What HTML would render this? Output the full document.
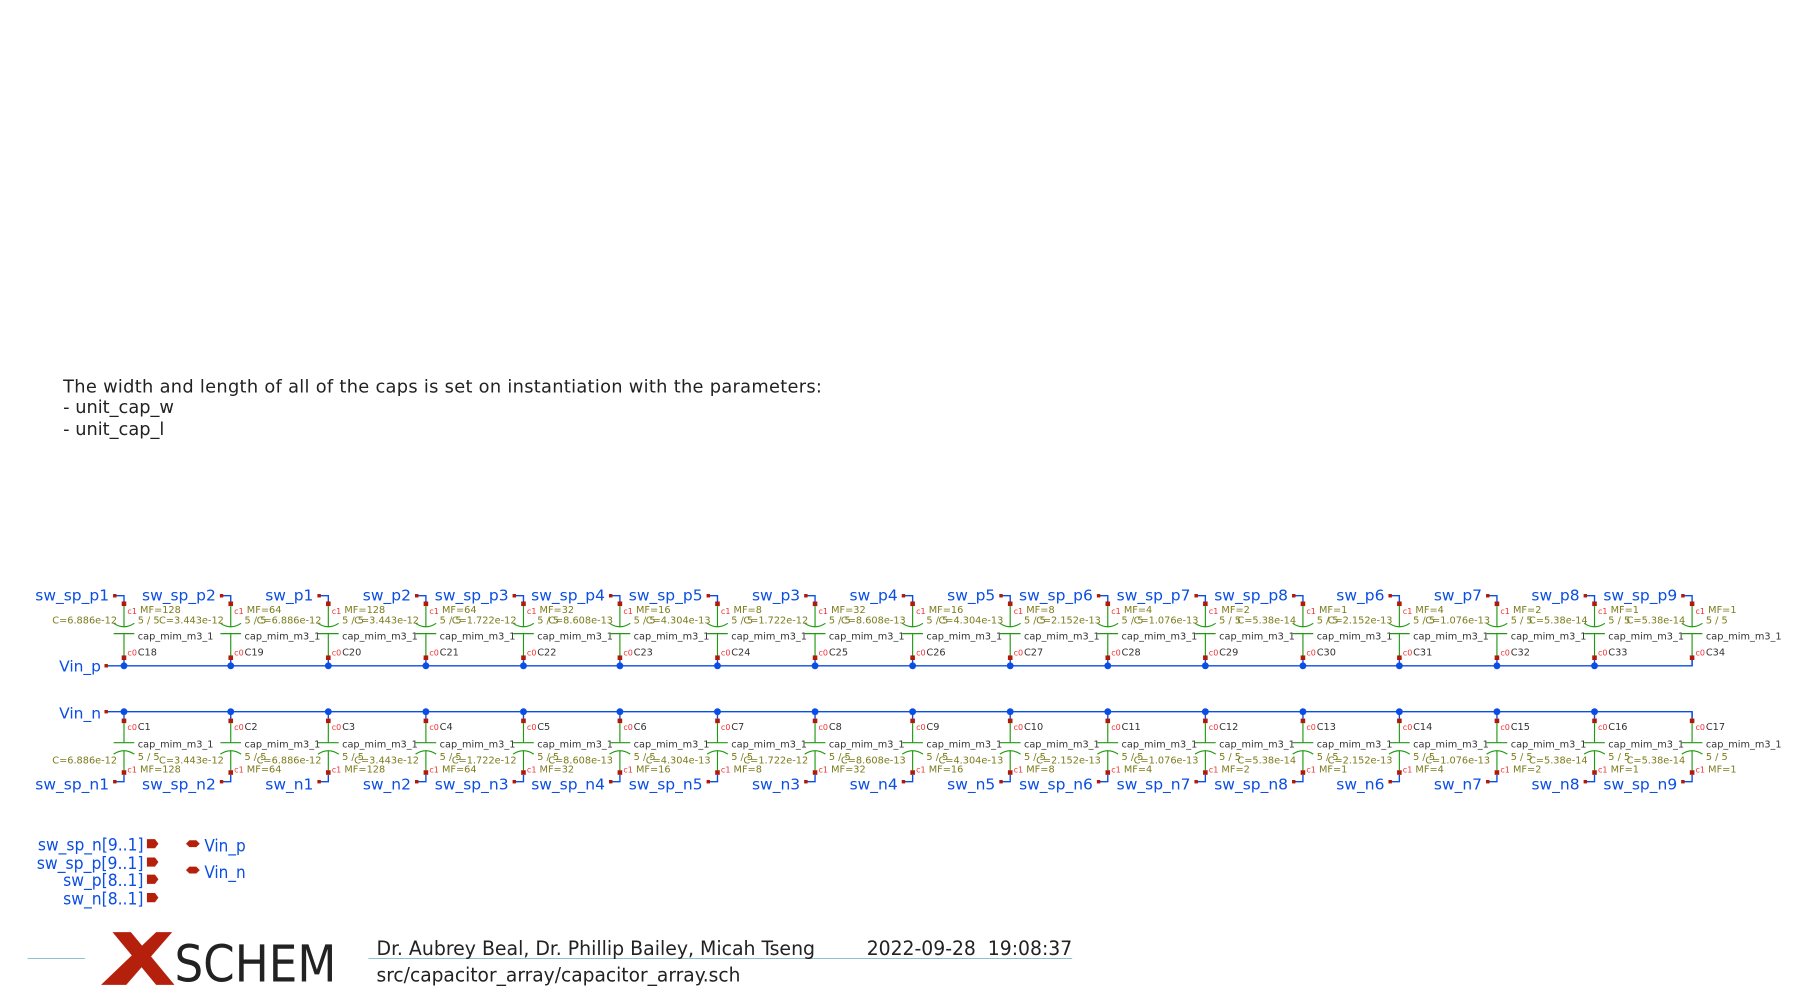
<!DOCTYPE html>
<html><head><meta charset="utf-8"><style>
html,body{margin:0;padding:0;background:#fff;width:1800px;height:1006px;overflow:hidden}
svg{display:block}
.lb{font-family:"DejaVu Sans","Liberation Sans",sans-serif;font-size:13.5px;fill:#0a4ee4}
.s{font-family:"DejaVu Sans","Liberation Sans",sans-serif;font-size:8.5px}
.o{fill:#7b7b1c}.g{fill:#333}.r{fill:#f03030;font-size:7px}
.cd{font-family:"DejaVu Sans Condensed","DejaVu Sans","Liberation Sans",sans-serif}
</style></head><body>
<svg width="1800" height="1006" viewBox="0 0 1568 876.4" preserveAspectRatio="none" xmlns="http://www.w3.org/2000/svg">
<defs>
<g id="ct">
<path d="M-8,519H0V526" fill="none" stroke="#0a4ee4" stroke-width="1.2"/>
<rect x="-9.5" y="517.5" width="3" height="3" fill="#b01a0a"/>
<rect x="-2" y="524" width="4" height="4" fill="#b01a0a"/>
<path d="M0,528V546M-9,543Q0,549 9,543M-9,552H9M0,552V571" fill="none" stroke="#1f9a10" stroke-width="1"/>
<rect x="-2" y="571" width="4" height="4" fill="#b01a0a"/>
<path d="M0,575V580" stroke="#0a4ee4" stroke-width="1.2"/>
</g>
<g id="cb">
<path d="M0,620V626" stroke="#0a4ee4" stroke-width="1.2"/>
<rect x="-2" y="626" width="4" height="4" fill="#b01a0a"/>
<path d="M0,630V647M-9,647H9M-9,657Q0,651 9,657M0,654V671" fill="none" stroke="#1f9a10" stroke-width="1"/>
<rect x="-2" y="671" width="4" height="4" fill="#b01a0a"/>
<path d="M0,675V681H-8" fill="none" stroke="#0a4ee4" stroke-width="1.2"/>
<rect x="-9.5" y="679.5" width="3" height="3" fill="#b01a0a"/>
</g>
</defs>
<text x="55" y="342" font-family="DejaVu Sans,Liberation Sans,sans-serif" font-size="15.5" fill="#222" textLength="661">The width and length of all of the caps is set on instantiation with the parameters:</text>
<text x="55" y="360" font-family="DejaVu Sans,Liberation Sans,sans-serif" font-size="15.5" fill="#222">- unit_cap_w</text>
<text x="55" y="379" font-family="DejaVu Sans,Liberation Sans,sans-serif" font-size="15.5" fill="#222">- unit_cap_l</text>

<path d="M93,580H1474V575M93,620H1474V626" fill="none" stroke="#0a4ee4" stroke-width="1.2"/>
<rect x="91" y="578.5" width="3" height="3" fill="#b01a0a"/><rect x="91" y="618.5" width="3" height="3" fill="#b01a0a"/>
<text class="lb" x="88" y="585" text-anchor="end">Vin_p</text>
<text class="lb" x="88" y="626" text-anchor="end">Vin_n</text>
<g fill="#0a4ee4">
<circle cx="108" cy="580" r="3"/><circle cx="201" cy="580" r="3"/><circle cx="286" cy="580" r="3"/><circle cx="371" cy="580" r="3"/><circle cx="456" cy="580" r="3"/><circle cx="540" cy="580" r="3"/><circle cx="625" cy="580" r="3"/><circle cx="710" cy="580" r="3"/><circle cx="795" cy="580" r="3"/><circle cx="880" cy="580" r="3"/><circle cx="965" cy="580" r="3"/><circle cx="1050" cy="580" r="3"/><circle cx="1135" cy="580" r="3"/><circle cx="1219" cy="580" r="3"/><circle cx="1304" cy="580" r="3"/><circle cx="1389" cy="580" r="3"/>
<circle cx="108" cy="620" r="3"/><circle cx="201" cy="620" r="3"/><circle cx="286" cy="620" r="3"/><circle cx="371" cy="620" r="3"/><circle cx="456" cy="620" r="3"/><circle cx="540" cy="620" r="3"/><circle cx="625" cy="620" r="3"/><circle cx="710" cy="620" r="3"/><circle cx="795" cy="620" r="3"/><circle cx="880" cy="620" r="3"/><circle cx="965" cy="620" r="3"/><circle cx="1050" cy="620" r="3"/><circle cx="1135" cy="620" r="3"/><circle cx="1219" cy="620" r="3"/><circle cx="1304" cy="620" r="3"/><circle cx="1389" cy="620" r="3"/>
</g>

<g transform="translate(108,0)"><use href="#ct"/><use href="#cb"/>
<text class="lb" x="-13" y="523" text-anchor="end">sw_sp_p1</text><text class="lb" x="-13" y="688" text-anchor="end">sw_sp_n1</text>
<text class="s r" x="3" y="535">c1</text><text class="s o" x="14" y="534">MF=128</text><text class="s o" x="12" y="543">5 / 5</text><text class="s o" x="-6" y="543" text-anchor="end">C=6.886e-12</text><text class="s g" x="12" y="557">cap_mim_m3_1</text><text class="s r" x="3" y="571">c0</text><text class="s g" x="12" y="571">C18</text>
<text class="s r" x="3" y="636">c0</text><text class="s g" x="12" y="636">C1</text><text class="s g" x="12" y="651">cap_mim_m3_1</text><text class="s o" x="12" y="662">5 / 5</text><text class="s o" x="-6" y="665" text-anchor="end">C=6.886e-12</text><text class="s r" x="3" y="673">c1</text><text class="s o" x="14" y="673">MF=128</text></g>

<g transform="translate(201,0)"><use href="#ct"/><use href="#cb"/>
<text class="lb" x="-13" y="523" text-anchor="end">sw_sp_p2</text><text class="lb" x="-13" y="688" text-anchor="end">sw_sp_n2</text>
<text class="s r" x="3" y="535">c1</text><text class="s o" x="14" y="534">MF=64</text><text class="s o" x="12" y="543">5 / 5</text><text class="s o" x="-6" y="543" text-anchor="end">C=3.443e-12</text><text class="s g" x="12" y="557">cap_mim_m3_1</text><text class="s r" x="3" y="571">c0</text><text class="s g" x="12" y="571">C19</text>
<text class="s r" x="3" y="636">c0</text><text class="s g" x="12" y="636">C2</text><text class="s g" x="12" y="651">cap_mim_m3_1</text><text class="s o" x="12" y="662">5 / 5</text><text class="s o" x="-6" y="665" text-anchor="end">C=3.443e-12</text><text class="s r" x="3" y="673">c1</text><text class="s o" x="14" y="673">MF=64</text></g>

<g transform="translate(286,0)"><use href="#ct"/><use href="#cb"/>
<text class="lb" x="-13" y="523" text-anchor="end">sw_p1</text><text class="lb" x="-13" y="688" text-anchor="end">sw_n1</text>
<text class="s r" x="3" y="535">c1</text><text class="s o" x="14" y="534">MF=128</text><text class="s o" x="12" y="543">5 / 5</text><text class="s o" x="-6" y="543" text-anchor="end">C=6.886e-12</text><text class="s g" x="12" y="557">cap_mim_m3_1</text><text class="s r" x="3" y="571">c0</text><text class="s g" x="12" y="571">C20</text>
<text class="s r" x="3" y="636">c0</text><text class="s g" x="12" y="636">C3</text><text class="s g" x="12" y="651">cap_mim_m3_1</text><text class="s o" x="12" y="662">5 / 5</text><text class="s o" x="-6" y="665" text-anchor="end">C=6.886e-12</text><text class="s r" x="3" y="673">c1</text><text class="s o" x="14" y="673">MF=128</text></g>

<g transform="translate(371,0)"><use href="#ct"/><use href="#cb"/>
<text class="lb" x="-13" y="523" text-anchor="end">sw_p2</text><text class="lb" x="-13" y="688" text-anchor="end">sw_n2</text>
<text class="s r" x="3" y="535">c1</text><text class="s o" x="14" y="534">MF=64</text><text class="s o" x="12" y="543">5 / 5</text><text class="s o" x="-6" y="543" text-anchor="end">C=3.443e-12</text><text class="s g" x="12" y="557">cap_mim_m3_1</text><text class="s r" x="3" y="571">c0</text><text class="s g" x="12" y="571">C21</text>
<text class="s r" x="3" y="636">c0</text><text class="s g" x="12" y="636">C4</text><text class="s g" x="12" y="651">cap_mim_m3_1</text><text class="s o" x="12" y="662">5 / 5</text><text class="s o" x="-6" y="665" text-anchor="end">C=3.443e-12</text><text class="s r" x="3" y="673">c1</text><text class="s o" x="14" y="673">MF=64</text></g>

<g transform="translate(456,0)"><use href="#ct"/><use href="#cb"/>
<text class="lb" x="-13" y="523" text-anchor="end">sw_sp_p3</text><text class="lb" x="-13" y="688" text-anchor="end">sw_sp_n3</text>
<text class="s r" x="3" y="535">c1</text><text class="s o" x="14" y="534">MF=32</text><text class="s o" x="12" y="543">5 / 5</text><text class="s o" x="-6" y="543" text-anchor="end">C=1.722e-12</text><text class="s g" x="12" y="557">cap_mim_m3_1</text><text class="s r" x="3" y="571">c0</text><text class="s g" x="12" y="571">C22</text>
<text class="s r" x="3" y="636">c0</text><text class="s g" x="12" y="636">C5</text><text class="s g" x="12" y="651">cap_mim_m3_1</text><text class="s o" x="12" y="662">5 / 5</text><text class="s o" x="-6" y="665" text-anchor="end">C=1.722e-12</text><text class="s r" x="3" y="673">c1</text><text class="s o" x="14" y="673">MF=32</text></g>

<g transform="translate(540,0)"><use href="#ct"/><use href="#cb"/>
<text class="lb" x="-13" y="523" text-anchor="end">sw_sp_p4</text><text class="lb" x="-13" y="688" text-anchor="end">sw_sp_n4</text>
<text class="s r" x="3" y="535">c1</text><text class="s o" x="14" y="534">MF=16</text><text class="s o" x="12" y="543">5 / 5</text><text class="s o" x="-6" y="543" text-anchor="end">C=8.608e-13</text><text class="s g" x="12" y="557">cap_mim_m3_1</text><text class="s r" x="3" y="571">c0</text><text class="s g" x="12" y="571">C23</text>
<text class="s r" x="3" y="636">c0</text><text class="s g" x="12" y="636">C6</text><text class="s g" x="12" y="651">cap_mim_m3_1</text><text class="s o" x="12" y="662">5 / 5</text><text class="s o" x="-6" y="665" text-anchor="end">C=8.608e-13</text><text class="s r" x="3" y="673">c1</text><text class="s o" x="14" y="673">MF=16</text></g>

<g transform="translate(625,0)"><use href="#ct"/><use href="#cb"/>
<text class="lb" x="-13" y="523" text-anchor="end">sw_sp_p5</text><text class="lb" x="-13" y="688" text-anchor="end">sw_sp_n5</text>
<text class="s r" x="3" y="535">c1</text><text class="s o" x="14" y="534">MF=8</text><text class="s o" x="12" y="543">5 / 5</text><text class="s o" x="-6" y="543" text-anchor="end">C=4.304e-13</text><text class="s g" x="12" y="557">cap_mim_m3_1</text><text class="s r" x="3" y="571">c0</text><text class="s g" x="12" y="571">C24</text>
<text class="s r" x="3" y="636">c0</text><text class="s g" x="12" y="636">C7</text><text class="s g" x="12" y="651">cap_mim_m3_1</text><text class="s o" x="12" y="662">5 / 5</text><text class="s o" x="-6" y="665" text-anchor="end">C=4.304e-13</text><text class="s r" x="3" y="673">c1</text><text class="s o" x="14" y="673">MF=8</text></g>

<g transform="translate(710,0)"><use href="#ct"/><use href="#cb"/>
<text class="lb" x="-13" y="523" text-anchor="end">sw_p3</text><text class="lb" x="-13" y="688" text-anchor="end">sw_n3</text>
<text class="s r" x="3" y="535">c1</text><text class="s o" x="14" y="534">MF=32</text><text class="s o" x="12" y="543">5 / 5</text><text class="s o" x="-6" y="543" text-anchor="end">C=1.722e-12</text><text class="s g" x="12" y="557">cap_mim_m3_1</text><text class="s r" x="3" y="571">c0</text><text class="s g" x="12" y="571">C25</text>
<text class="s r" x="3" y="636">c0</text><text class="s g" x="12" y="636">C8</text><text class="s g" x="12" y="651">cap_mim_m3_1</text><text class="s o" x="12" y="662">5 / 5</text><text class="s o" x="-6" y="665" text-anchor="end">C=1.722e-12</text><text class="s r" x="3" y="673">c1</text><text class="s o" x="14" y="673">MF=32</text></g>

<g transform="translate(795,0)"><use href="#ct"/><use href="#cb"/>
<text class="lb" x="-13" y="523" text-anchor="end">sw_p4</text><text class="lb" x="-13" y="688" text-anchor="end">sw_n4</text>
<text class="s r" x="3" y="535">c1</text><text class="s o" x="14" y="534">MF=16</text><text class="s o" x="12" y="543">5 / 5</text><text class="s o" x="-6" y="543" text-anchor="end">C=8.608e-13</text><text class="s g" x="12" y="557">cap_mim_m3_1</text><text class="s r" x="3" y="571">c0</text><text class="s g" x="12" y="571">C26</text>
<text class="s r" x="3" y="636">c0</text><text class="s g" x="12" y="636">C9</text><text class="s g" x="12" y="651">cap_mim_m3_1</text><text class="s o" x="12" y="662">5 / 5</text><text class="s o" x="-6" y="665" text-anchor="end">C=8.608e-13</text><text class="s r" x="3" y="673">c1</text><text class="s o" x="14" y="673">MF=16</text></g>

<g transform="translate(880,0)"><use href="#ct"/><use href="#cb"/>
<text class="lb" x="-13" y="523" text-anchor="end">sw_p5</text><text class="lb" x="-13" y="688" text-anchor="end">sw_n5</text>
<text class="s r" x="3" y="535">c1</text><text class="s o" x="14" y="534">MF=8</text><text class="s o" x="12" y="543">5 / 5</text><text class="s o" x="-6" y="543" text-anchor="end">C=4.304e-13</text><text class="s g" x="12" y="557">cap_mim_m3_1</text><text class="s r" x="3" y="571">c0</text><text class="s g" x="12" y="571">C27</text>
<text class="s r" x="3" y="636">c0</text><text class="s g" x="12" y="636">C10</text><text class="s g" x="12" y="651">cap_mim_m3_1</text><text class="s o" x="12" y="662">5 / 5</text><text class="s o" x="-6" y="665" text-anchor="end">C=4.304e-13</text><text class="s r" x="3" y="673">c1</text><text class="s o" x="14" y="673">MF=8</text></g>

<g transform="translate(965,0)"><use href="#ct"/><use href="#cb"/>
<text class="lb" x="-13" y="523" text-anchor="end">sw_sp_p6</text><text class="lb" x="-13" y="688" text-anchor="end">sw_sp_n6</text>
<text class="s r" x="3" y="535">c1</text><text class="s o" x="14" y="534">MF=4</text><text class="s o" x="12" y="543">5 / 5</text><text class="s o" x="-6" y="543" text-anchor="end">C=2.152e-13</text><text class="s g" x="12" y="557">cap_mim_m3_1</text><text class="s r" x="3" y="571">c0</text><text class="s g" x="12" y="571">C28</text>
<text class="s r" x="3" y="636">c0</text><text class="s g" x="12" y="636">C11</text><text class="s g" x="12" y="651">cap_mim_m3_1</text><text class="s o" x="12" y="662">5 / 5</text><text class="s o" x="-6" y="665" text-anchor="end">C=2.152e-13</text><text class="s r" x="3" y="673">c1</text><text class="s o" x="14" y="673">MF=4</text></g>

<g transform="translate(1050,0)"><use href="#ct"/><use href="#cb"/>
<text class="lb" x="-13" y="523" text-anchor="end">sw_sp_p7</text><text class="lb" x="-13" y="688" text-anchor="end">sw_sp_n7</text>
<text class="s r" x="3" y="535">c1</text><text class="s o" x="14" y="534">MF=2</text><text class="s o" x="12" y="543">5 / 5</text><text class="s o" x="-6" y="543" text-anchor="end">C=1.076e-13</text><text class="s g" x="12" y="557">cap_mim_m3_1</text><text class="s r" x="3" y="571">c0</text><text class="s g" x="12" y="571">C29</text>
<text class="s r" x="3" y="636">c0</text><text class="s g" x="12" y="636">C12</text><text class="s g" x="12" y="651">cap_mim_m3_1</text><text class="s o" x="12" y="662">5 / 5</text><text class="s o" x="-6" y="665" text-anchor="end">C=1.076e-13</text><text class="s r" x="3" y="673">c1</text><text class="s o" x="14" y="673">MF=2</text></g>

<g transform="translate(1135,0)"><use href="#ct"/><use href="#cb"/>
<text class="lb" x="-13" y="523" text-anchor="end">sw_sp_p8</text><text class="lb" x="-13" y="688" text-anchor="end">sw_sp_n8</text>
<text class="s r" x="3" y="535">c1</text><text class="s o" x="14" y="534">MF=1</text><text class="s o" x="12" y="543">5 / 5</text><text class="s o" x="-6" y="543" text-anchor="end">C=5.38e-14</text><text class="s g" x="12" y="557">cap_mim_m3_1</text><text class="s r" x="3" y="571">c0</text><text class="s g" x="12" y="571">C30</text>
<text class="s r" x="3" y="636">c0</text><text class="s g" x="12" y="636">C13</text><text class="s g" x="12" y="651">cap_mim_m3_1</text><text class="s o" x="12" y="662">5 / 5</text><text class="s o" x="-6" y="665" text-anchor="end">C=5.38e-14</text><text class="s r" x="3" y="673">c1</text><text class="s o" x="14" y="673">MF=1</text></g>

<g transform="translate(1219,0)"><use href="#ct"/><use href="#cb"/>
<text class="lb" x="-13" y="523" text-anchor="end">sw_p6</text><text class="lb" x="-13" y="688" text-anchor="end">sw_n6</text>
<text class="s r" x="3" y="535">c1</text><text class="s o" x="14" y="534">MF=4</text><text class="s o" x="12" y="543">5 / 5</text><text class="s o" x="-6" y="543" text-anchor="end">C=2.152e-13</text><text class="s g" x="12" y="557">cap_mim_m3_1</text><text class="s r" x="3" y="571">c0</text><text class="s g" x="12" y="571">C31</text>
<text class="s r" x="3" y="636">c0</text><text class="s g" x="12" y="636">C14</text><text class="s g" x="12" y="651">cap_mim_m3_1</text><text class="s o" x="12" y="662">5 / 5</text><text class="s o" x="-6" y="665" text-anchor="end">C=2.152e-13</text><text class="s r" x="3" y="673">c1</text><text class="s o" x="14" y="673">MF=4</text></g>

<g transform="translate(1304,0)"><use href="#ct"/><use href="#cb"/>
<text class="lb" x="-13" y="523" text-anchor="end">sw_p7</text><text class="lb" x="-13" y="688" text-anchor="end">sw_n7</text>
<text class="s r" x="3" y="535">c1</text><text class="s o" x="14" y="534">MF=2</text><text class="s o" x="12" y="543">5 / 5</text><text class="s o" x="-6" y="543" text-anchor="end">C=1.076e-13</text><text class="s g" x="12" y="557">cap_mim_m3_1</text><text class="s r" x="3" y="571">c0</text><text class="s g" x="12" y="571">C32</text>
<text class="s r" x="3" y="636">c0</text><text class="s g" x="12" y="636">C15</text><text class="s g" x="12" y="651">cap_mim_m3_1</text><text class="s o" x="12" y="662">5 / 5</text><text class="s o" x="-6" y="665" text-anchor="end">C=1.076e-13</text><text class="s r" x="3" y="673">c1</text><text class="s o" x="14" y="673">MF=2</text></g>

<g transform="translate(1389,0)"><use href="#ct"/><use href="#cb"/>
<text class="lb" x="-13" y="523" text-anchor="end">sw_p8</text><text class="lb" x="-13" y="688" text-anchor="end">sw_n8</text>
<text class="s r" x="3" y="535">c1</text><text class="s o" x="14" y="534">MF=1</text><text class="s o" x="12" y="543">5 / 5</text><text class="s o" x="-6" y="543" text-anchor="end">C=5.38e-14</text><text class="s g" x="12" y="557">cap_mim_m3_1</text><text class="s r" x="3" y="571">c0</text><text class="s g" x="12" y="571">C33</text>
<text class="s r" x="3" y="636">c0</text><text class="s g" x="12" y="636">C16</text><text class="s g" x="12" y="651">cap_mim_m3_1</text><text class="s o" x="12" y="662">5 / 5</text><text class="s o" x="-6" y="665" text-anchor="end">C=5.38e-14</text><text class="s r" x="3" y="673">c1</text><text class="s o" x="14" y="673">MF=1</text></g>

<g transform="translate(1474,0)"><use href="#ct"/><use href="#cb"/>
<text class="lb" x="-13" y="523" text-anchor="end">sw_sp_p9</text><text class="lb" x="-13" y="688" text-anchor="end">sw_sp_n9</text>
<text class="s r" x="3" y="535">c1</text><text class="s o" x="14" y="534">MF=1</text><text class="s o" x="12" y="543">5 / 5</text><text class="s o" x="-6" y="543" text-anchor="end">C=5.38e-14</text><text class="s g" x="12" y="557">cap_mim_m3_1</text><text class="s r" x="3" y="571">c0</text><text class="s g" x="12" y="571">C34</text>
<text class="s r" x="3" y="636">c0</text><text class="s g" x="12" y="636">C17</text><text class="s g" x="12" y="651">cap_mim_m3_1</text><text class="s o" x="12" y="662">5 / 5</text><text class="s o" x="-6" y="665" text-anchor="end">C=5.38e-14</text><text class="s r" x="3" y="673">c1</text><text class="s o" x="14" y="673">MF=1</text></g>

<!-- legend -->
<g class="cd" font-size="14.5" fill="#0a4ee4" text-anchor="end">
<text x="125" y="741" textLength="92" lengthAdjust="spacingAndGlyphs">sw_sp_n[9..1]</text>
<text x="125" y="757" textLength="93" lengthAdjust="spacingAndGlyphs">sw_sp_p[9..1]</text>
<text x="125" y="772" textLength="70" lengthAdjust="spacingAndGlyphs">sw_p[8..1]</text>
<text x="125" y="788" textLength="70" lengthAdjust="spacingAndGlyphs">sw_n[8..1]</text>
</g>
<g fill="#b5200d">
<path d="M128,731h7l3,4l-3,4h-7z"/><path d="M128,747h7l3,4l-3,4h-7z"/><path d="M128,762h7l3,4l-3,4h-7z"/><path d="M128,778h7l3,4l-3,4h-7z"/>
<path d="M162,735l3,-3h6l3,3l-3,3h-6z"/><path d="M162,758l3,-3h6l3,3l-3,3h-6z"/>
</g>
<text class="cd" x="178" y="742" font-size="14.5" fill="#0a4ee4" textLength="36" lengthAdjust="spacingAndGlyphs">Vin_p</text>
<text class="cd" x="178" y="765" font-size="14.5" fill="#0a4ee4" textLength="36" lengthAdjust="spacingAndGlyphs">Vin_n</text>

<!-- footer -->
<path d="M24,835H74M321,835H934" stroke="#7fb8c8" stroke-width="0.8"/>
<path d="M98,812H114L152,858H136Z" fill="#b5200d"/>
<path d="M136,812H150L110,858H88Z" fill="#b5200d"/>
<text x="152" y="855" font-family="DejaVu Sans Condensed,DejaVu Sans,sans-serif" font-size="44" fill="#222" textLength="141" lengthAdjust="spacingAndGlyphs">SCHEM</text>
<text class="cd" x="328" y="832" font-size="17" fill="#222" textLength="382" lengthAdjust="spacingAndGlyphs">Dr. Aubrey Beal, Dr. Phillip Bailey, Micah Tseng</text>
<text class="cd" x="755" y="832" font-size="17" fill="#222" textLength="179" lengthAdjust="spacingAndGlyphs">2022-09-28&#160; 19:08:37</text>
<text class="cd" x="328" y="855" font-size="17" fill="#222" textLength="317" lengthAdjust="spacingAndGlyphs">src/capacitor_array/capacitor_array.sch</text>
</svg>
</body></html>
